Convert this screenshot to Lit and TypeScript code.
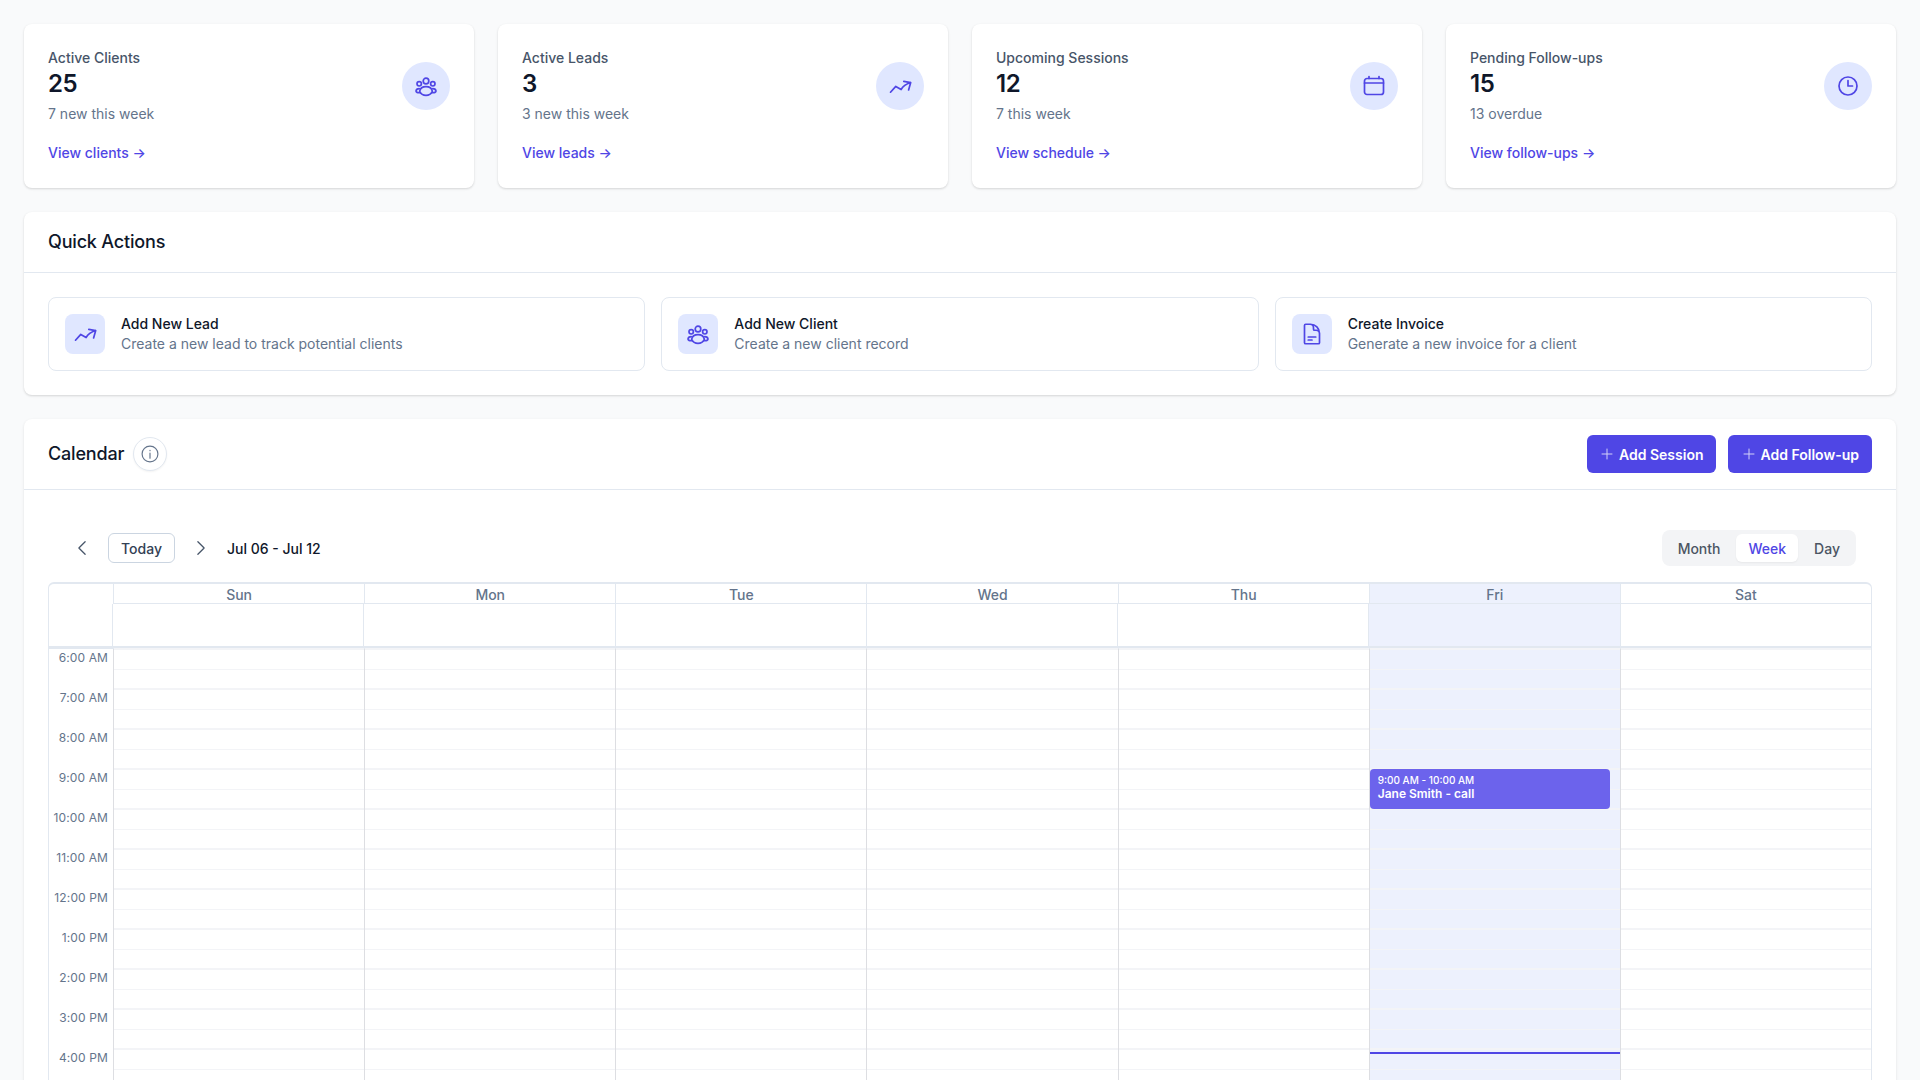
import { LitElement, html, css, svg } from "lit";
import { customElement } from "lit/decorators.js";

const icons: Record<string, unknown> = {
  users: svg`<circle cx="12" cy="7" r="2.8"/><circle cx="5.2" cy="9.800" r="2.200"/><circle cx="18.800" cy="9.800" r="2.200"/><path d="M5.600 17.400C6.200 14.400 9 12.600 12 12.600s5.800 1.800 6.400 4.800c-1.400 2.900-3.900 4-6.400 4s-5-1.100-6.400-4z"/><path d="M5.200 14.600c-1.700 0-3.000 1-3.200 2.500 0 1.100 1.600 1.800 3.600 1.600M18.800 14.600c1.700 0 3 1 3.200 2.500 0 1.100-1.600 1.800-3.600 1.600"/>`,
  trend: svg`<path d="M2.500 18.200 7.800 12.400l5.300 3.100c1.700-3 4.600-5.300 9.400-7M15.800 7.400l6.900 1.200-2.100 7.300"/>`,
  cal: svg`<rect x="2.500" y="4.500" width="19" height="16" rx="2.500"/><path d="M7 2.500v2M17 2.500v2M2.500 9h19"/>`,
  clock: svg`<circle cx="12" cy="12" r="9"/><path d="M12 6.500V12h4.500"/>`,
  doc: svg`<path d="M19.500 14.250v-2.625a3.375 3.375 0 0 0-3.375-3.375h-1.500A1.125 1.125 0 0 1 13.500 7.125v-1.500a3.375 3.375 0 0 0-3.375-3.375H8.250m0 12.750h7.500m-7.500 3H12M10.500 2.250H5.625c-.621 0-1.125.504-1.125 1.125v17.250c0 .621.504 1.125 1.125 1.125h12.750c.621 0 1.125-.504 1.125-1.125V11.250a9 9 0 0 0-9-9z"/>`,
  info: svg`<circle cx="12" cy="12" r="9.500"/><path d="M12 11v6M12 7.500v.5"/>`,
  plus: svg`<path d="M12 4.500v15m7.500-7.500h-15"/>`,
  left: svg`<path d="M15.750 19.500 8.250 12l7.500-7.500"/>`,
  right: svg`<path d="m8.250 4.500 7.500 7.500-7.500 7.500"/>`,
};
const icon = (n: string, w = 1.5) =>
  html`<svg class="ic" viewBox="0 0 24 24" fill="none" stroke="currentColor" stroke-width="${w}" stroke-linecap="round" stroke-linejoin="round">${icons[n]}</svg>`;

const stats = [
  { t: "Active Clients", n: "25", s: "7 new this week", l: "View clients", i: "users" },
  { t: "Active Leads", n: "3", s: "3 new this week", l: "View leads", i: "trend" },
  { t: "Upcoming Sessions", n: "12", s: "7 this week", l: "View schedule", i: "cal" },
  { t: "Pending Follow-ups", n: "15", s: "13 overdue", l: "View follow-ups", i: "clock" },
];
const actions = [
  { t: "Add New Lead", s: "Create a new lead to track potential clients", i: "trend" },
  { t: "Add New Client", s: "Create a new client record", i: "users" },
  { t: "Create Invoice", s: "Generate a new invoice for a client", i: "doc" },
];
const days = ["Sun", "Mon", "Tue", "Wed", "Thu", "Fri", "Sat"];
const hours = ["6:00 AM", "7:00 AM", "8:00 AM", "9:00 AM", "10:00 AM", "11:00 AM", "12:00 PM", "1:00 PM", "2:00 PM", "3:00 PM", "4:00 PM"];

@customElement("app-root")
export class AppRoot extends LitElement {
  static styles = css`
    :host { display: block; height: 1080px; overflow: hidden; background: #f9fafb; font-family: Inter, "Liberation Sans", sans-serif; color: #0f172a; }
    * { box-sizing: border-box; }
    .page { padding: 24px; display: flex; flex-direction: column; gap: 24px; }
    .panel { background: #fff; border-radius: 8px; box-shadow: 0 1px 3px rgba(0,0,0,.1), 0 1px 2px rgba(0,0,0,.06); }
    .ic { display: block; width: 24px; height: 24px; }
    .stats { display: grid; grid-template-columns: repeat(4, 1fr); gap: 24px; }
    .stat { height: 164px; padding: 24px; display: flex; flex-direction: column; }
    .stat-top { display: flex; justify-content: space-between; align-items: center; }
    .stat-t { font-size: 14px; line-height: 20px; font-weight: 500; color: #475569; }
    .stat-n { font-size: 24px; line-height: 32px; font-weight: 600; color: #0f172a; letter-spacing: -0.02em; }
    .stat-s { font-size: 14px; line-height: 20px; color: #64748b; margin-top: 4px; }
    .round { width: 48px; height: 48px; border-radius: 50%; background: #e0e7ff; color: #4f46e5; display: flex; align-items: center; justify-content: center; }
    .link { margin-top: 19px; font-size: 14px; line-height: 20px; font-weight: 500; color: #4f46e5; }
    .head { display: flex; align-items: center; justify-content: space-between; padding: 0 24px; height: 61px; border-bottom: 1px solid #e2e8f0; }
    h2 { margin: 0; font-size: 18px; line-height: 28px; font-weight: 500; color: #0f172a; letter-spacing: -0.01em; }
    .qa-body { padding: 24px; display: grid; grid-template-columns: repeat(3, 1fr); gap: 16px; }
    .qa { height: 74px; border: 1px solid #e2e8f0; border-radius: 8px; padding: 0 16px; display: flex; align-items: center; gap: 16px; }
    .square { width: 40px; height: 40px; border-radius: 8px; background: #e0e7ff; color: #4f46e5; display: flex; align-items: center; justify-content: center; }
    .qa-t { font-size: 14px; line-height: 20px; font-weight: 500; color: #0f172a; }
    .qa-s { font-size: 14px; line-height: 20px; color: #64748b; }
  `;
  render() {
    return html`<div class="page">
      <div class="stats">
        ${stats.map((s) => html`<div class="panel stat">
          <div class="stat-top">
            <div>
              <div class="stat-t">${s.t}</div>
              <div class="stat-n">${s.n}</div>
              <div class="stat-s">${s.s}</div>
            </div>
            <div class="round">${icon(s.i, 1.7)}</div>
          </div>
          <div class="link">${s.l} →</div>
        </div>`)}
      </div>
      <div class="panel">
        <div class="head"><h2>Quick Actions</h2></div>
        <div class="qa-body">
          ${actions.map((a) => html`<div class="qa">
            <div class="square">${icon(a.i, 1.7)}</div>
            <div><div class="qa-t">${a.t}</div><div class="qa-s">${a.s}</div></div>
          </div>`)}
        </div>
      </div>
      <app-calendar></app-calendar>
    </div>`;
  }
}

@customElement("app-calendar")
export class AppCalendar extends LitElement {
  static styles = css`
    :host { display: block; background: #fff; border-radius: 8px; box-shadow: 0 1px 3px rgba(0,0,0,.1); font-family: Inter, "Liberation Sans", sans-serif; }
    * { box-sizing: border-box; }
    .ic { display: block; width: 24px; height: 24px; }
    .head { display: flex; align-items: center; justify-content: space-between; padding: 0 24px; height: 71px; border-bottom: 1px solid #e2e8f0; }
    h2 { margin: 0; font-size: 18px; line-height: 28px; font-weight: 500; color: #0f172a; letter-spacing: -0.01em; }
    .title { display: flex; align-items: center; gap: 9px; }
    .info { width: 34px; height: 34px; border-radius: 50%; background: #fff; border: 1px solid #e2e8f0; color: #64748b; display: flex; align-items: center; justify-content: center; box-shadow: 0 1px 2px rgba(0,0,0,.05); }
    .info .ic { width: 20px; height: 20px; }
    .btns { display: flex; gap: 12px; }
    .btn { height: 38px; padding: 0 12px; background: #4f46e5; color: #fff; border-radius: 6px; font-size: 14px; font-weight: 600; display: flex; align-items: center; gap: 4px; }
    .btn:last-child { padding: 0 13px; }
    .btn .ic { width: 16px; height: 16px; opacity: .75; }
    .body { padding: 0 24px; }
    .bar { display: flex; align-items: center; justify-content: space-between; padding: 24px 16px 0 8px; height: 92px; }
    .bar-l { display: flex; align-items: center; }
    .nav { color: #475569; margin: 0 16px; }
    .nav .ic { width: 20px; height: 20px; }
    .today { height: 30px; padding: 0 12px; border: 1px solid #cbd5e1; border-radius: 6px; font-size: 14px; font-weight: 500; color: #334155; display: flex; align-items: center; }
    .range { font-size: 14px; font-weight: 500; color: #0f172a; }
    .seg { display: flex; gap: 4px; background: #f3f4f6; border-radius: 8px; padding: 4px; height: 36px; }
    .seg span { padding: 0 12px; font-size: 14px; font-weight: 500; color: #4b5563; display: flex; align-items: center; border-radius: 6px; }
    .seg .on { background: #fff; color: #4f46e5; box-shadow: 0 1px 2px rgba(0,0,0,.05); }
    .grid { border: 1px solid #e2e8f0; border-top: 2px solid #e2e8f0; border-radius: 6px 6px 0 0; position: relative; }
    .row { display: grid; grid-template-columns: 64px repeat(7, 1fr); }
    .allrow { margin-left: -1px; grid-template-columns: 64px repeat(7, 1fr); }
    .dayh { height: 20px; border-left: 1px solid #e2e8f0; border-bottom: 1px solid #e2e8f0; text-align: center; font-size: 14px; line-height: 22px; font-weight: 500; color: #64748b; }
    .allday { height: 42px; border-left: 1px solid #e2e8f0; }
    .sep { height: 3px; background: #e2e8f0; }
    .fri { background: #edf1fd; }
    .time { height: 40px; font-size: 12px; line-height: 16px; color: #64748b; text-align: right; padding: 1px 5px 0 0; letter-spacing: 0.01em; }
    .cell { height: 40px; border-left: 1px solid #dddee2; position: relative; }
    .cell::before { content: ""; position: absolute; left: 0; right: 0; top: -1px; height: 2px; background: #f3f4f7; }
    .cell::after { content: ""; position: absolute; left: 0; right: 0; top: 20px; height: 1px; background: #f3f4f7; }
    .event { position: absolute; left: 0; right: 10px; top: 0; height: 40px; background: #6c63ec; border-radius: 4px; color: #fff; padding: 5px 8px 0; z-index: 2; }
    .event div:first-child { font-size: 10px; line-height: 13px; font-weight: 500; }
    .event div:last-child { font-size: 12px; line-height: 13px; font-weight: 600; }
    .now { position: absolute; left: 0; right: 0; top: 3px; height: 2px; background: #4f46e5; z-index: 3; }
  `;
  render() {
    return html`
      <div class="head">
        <div class="title"><h2>Calendar</h2><div class="info">${icon("info", 1.4)}</div></div>
        <div class="btns">
          <div class="btn">${icon("plus")}Add Session</div>
          <div class="btn">${icon("plus")}Add Follow-up</div>
        </div>
      </div>
      <div class="body">
        <div class="bar">
          <div class="bar-l">
            <div class="nav">${icon("left")}</div>
            <div class="today">Today</div>
            <div class="nav">${icon("right")}</div>
            <div class="range">Jul 06 - Jul 12</div>
          </div>
          <div class="seg"><span>Month</span><span class="on">Week</span><span>Day</span></div>
        </div>
        <div class="grid">
          <div class="row"><div></div>${days.map((d) => html`<div class="dayh ${d === "Fri" ? "fri" : ""}">${d}</div>`)}</div>
          <div class="row allrow"><div></div>${days.map((d) => html`<div class="allday ${d === "Fri" ? "fri" : ""}"></div>`)}</div>
          <div class="sep"></div>
          ${hours.map((h) => html`<div class="row">
            <div class="time">${h}</div>
            ${days.map((d) => html`<div class="cell ${d === "Fri" ? "fri" : ""}">
              ${d === "Fri" && h === "9:00 AM" ? html`<div class="event"><div>9:00 AM - 10:00 AM</div><div>Jane Smith - call</div></div>` : ""}
              ${d === "Fri" && h === "4:00 PM" ? html`<div class="now"></div>` : ""}
            </div>`)}
          </div>`)}
        </div>
      </div>`;
  }
}
